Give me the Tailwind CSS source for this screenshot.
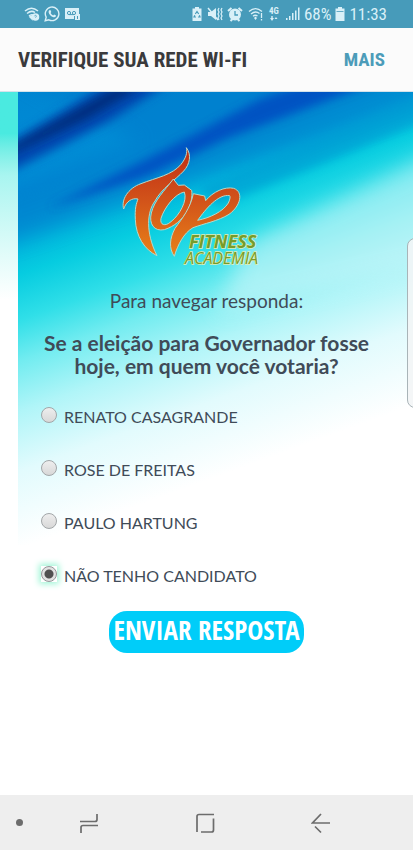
<!DOCTYPE html>
<html lang="pt-BR">
<head>
<meta charset="utf-8">
<meta name="viewport" content="width=device-width, initial-scale=1">
<title>Verifique sua rede Wi-Fi</title>
<script src="https://cdn.jsdelivr.net/npm/@tailwindcss/browser@4"></script>
</head>
<body class="min-h-screen flex flex-col bg-white font-['Lato',sans-serif] text-[#404b58]">

<div class="h-7 shrink-0 bg-[#479bba] text-[#d9f0f8] flex items-center justify-between pl-6 pr-[26px] font-['Roboto_Condensed','Roboto',sans-serif]">
  <div class="flex items-center gap-1">
    <svg class="w-4 h-4" viewBox="0 0 16 16" fill="none" stroke="currentColor" stroke-width="1.5"><path d="M1 5C5 1.500 10 1.500 14 5M3 7.500C6 5 9 5 11 6.500M5 10C6.500 8.500 8 8.500 9 9"/><path d="M6 11l2-1v3z" fill="currentColor"/><circle cx="11.500" cy="11" r="3" fill="currentColor"/><path d="M10.500 10.200c.2-1.200 2-1 1.900 0 0 .7-.9.800-.9 1.500" stroke="#479bba" stroke-width=".8"/></svg>
    <svg class="w-4 h-4" viewBox="0 0 16 16" fill="none" stroke="currentColor" stroke-width="1.400"><path d="M1.200 14.800l1-3.600a6.800 6.800 0 1 1 2.700 2.600z"/><path d="M5.300 4.300l1.100-.2.900 2-.7.900c.6 1.100 1.400 1.900 2.600 2.400l.9-.9 1.900 1-.2 1.100c-.8.900-1.900.8-3 .4C6.600 10.100 5 8.300 4.600 6.200c-.1-.8.200-1.400.7-1.900z" fill="currentColor" stroke="none"/></svg>
    <svg class="w-[17px] h-4" viewBox="0 0 17 16"><path d="M1 2h14v6h1v6h-5v-1H1z" fill="currentColor"/><g fill="none" stroke="#479bba"><circle cx="5" cy="7" r="1.600"/><circle cx="10" cy="7" r="1.600"/><path d="M5 8.600h5M13.500 10v3M10.500 10v3"/></g></svg>
  </div>
  <div class="flex items-center gap-1">
    <svg class="w-3 h-4" viewBox="0 0 12 16"><path d="M4 1h4v1.500h2.500V15h-9V2.500H4z" fill="currentColor"/><path d="M4.300 8L6 5.500 7.700 8M8.400 9.300L9 11H7M5 11H3l.8-1.800" fill="none" stroke="#479bba" stroke-width="1.200"/></svg>
    <svg class="w-4 h-4" viewBox="0 0 16 16" fill="none" stroke="currentColor" stroke-width="1.400"><path d="M1 6h3l5-4v12l-5-4H1z" fill="currentColor" stroke="none"/><path d="M1 2l10 12" /><path d="M12 2l-1 2 1 2-1 2 1 2-1 2 1 2M15 2l-1 2 1 2-1 2 1 2-1 2 1 2" stroke-width="1.200"/></svg>
    <svg class="w-4 h-4" viewBox="0 0 16 16"><circle cx="8" cy="8.500" r="6" fill="currentColor"/><path d="M1 5l3.500-3M15 5l-3.500-3M3.500 15l2-2M12.500 15l-2-2" stroke="currentColor" stroke-width="2"/><path d="M8 5v4h3" fill="none" stroke="#479bba" stroke-width="1.300"/></svg>
    <svg class="w-[17px] h-4" viewBox="0 0 17 16" fill="none" stroke="currentColor" stroke-width="1.300"><path d="M2 5.500C6 2 11 2 15 5.500M4 8C7 5.500 10 5.500 12.500 7.500M6 10.300C7.500 9 9 9 10.500 10"/><path d="M7 12l1.500-1.500L10 12l-1.500 2z" fill="currentColor" stroke="none"/><path d="M14.500 7v5M14.500 13v1.500"/></svg>
    <span class="w-3 flex flex-col items-center text-[9px] leading-[9px] font-bold">4G<svg class="w-2 h-[5px]" viewBox="0 0 8 5" fill="currentColor"><path d="M2 5L0 2h1.300V0h1.400v2H4zM6 1l1.500 2h-3z"/></svg></span>
    <svg class="w-4 h-4" viewBox="0 0 16 16" fill="currentColor"><path d="M2 12h1.500v2H2zM5 10h1.500v4H5zM8 7h1.500v7H8zM11 4.500h1.500V14H11zM14 1.500h1.500V14H14z"/></svg>
    <span class="text-[17px] leading-7">68%</span>
    <svg class="w-[10px] h-4" viewBox="0 0 10 16"><path d="M3 1h4v1.500h2.500V15h-9V2.500H3z" fill="currentColor"/><path d="M1.500 5.500h7" stroke="#479bba" stroke-width=".8"/></svg>
    <span class="text-[17px] leading-7">11:33</span>
  </div>
</div>

<header class="h-16 shrink-0 bg-[#fbfbfb] border-b border-[#d5e2ea] flex items-center justify-between pl-[18px] pr-7 font-['Roboto_Condensed','Roboto',sans-serif] font-bold">
  <h1 class="text-[21px] leading-6 text-[#3a3a3c]">VERIFIQUE SUA REDE WI-FI</h1>
  <a href="#" class="text-[19px] leading-6 text-[#4c9cb9]">MAIS</a>
</header>

<main class="relative grow flex flex-col items-center overflow-hidden">
  <div class="absolute left-0 top-0 w-[18px] h-52 bg-linear-to-b from-[#4aeae0] from-20% via-[#a8f5f0] via-40% to-white"></div>
  <svg class="absolute top-0 left-[18px] w-[calc(100%-18px)] h-[453px]" viewBox="0 0 395 453" preserveAspectRatio="none" aria-hidden="true">
    <defs>
      <linearGradient id="sky" gradientUnits="userSpaceOnUse" x1="0" y1="0" x2="147" y2="404">
        <stop offset="0" stop-color="#0086d2"/><stop offset=".22" stop-color="#008ed6"/><stop offset=".32" stop-color="#00b0dc"/>
        <stop offset=".4" stop-color="#06cce0"/><stop offset=".5" stop-color="#30dfe8"/><stop offset=".59" stop-color="#72ecf0"/>
        <stop offset=".7" stop-color="#b0f5f8"/><stop offset=".83" stop-color="#e2fbfd"/><stop offset="1" stop-color="#fff"/>
      </linearGradient>
      <filter id="soft" x="-20%" y="-40%" width="140%" height="180%"><feGaussianBlur stdDeviation="5"/></filter>
      <filter id="softer" x="-20%" y="-40%" width="140%" height="180%"><feGaussianBlur stdDeviation="10"/></filter>
    </defs>
    <rect width="395" height="453" fill="url(#sky)"/>
    <path d="M-20 -30H430V4L300 50L150 96L-20 154V100L120 50Z" fill="#007ccc" opacity=".65" filter="url(#softer)"/>
    <path d="M30 116L130 66L180 40L240 8L300 -14H370L290 16L210 46L130 84Z" fill="#0046c0" opacity=".8" filter="url(#soft)"/>
    <path d="M-20 58L90 -8H150L90 30L-20 86Z" fill="#0048b0" filter="url(#soft)"/>
    <path d="M-20 62L100 -6H124L70 26L-20 68Z" fill="#002870" opacity=".8" filter="url(#soft)"/>
    <path d="M180 96L300 46L420 -4V24L300 74L200 114Z" fill="#0098d2" opacity=".6" filter="url(#soft)"/>
    <path d="M230 150L420 60V170L200 220Z" fill="#d0f6f9" opacity=".55" filter="url(#softer)"/>
  </svg>

  <form class="relative w-full flex flex-col items-center pt-[53px]" onsubmit="return false">
    <svg class="w-[140px] h-[122px] ml-[-32px] overflow-visible" viewBox="60 30 420 366" role="img" aria-label="Top Fitness Academia">
      <defs><linearGradient id="flame" gradientUnits="userSpaceOnUse" x1="0" y1="40" x2="0" y2="360"><stop offset="0" stop-color="#c02c14"/><stop offset=".5" stop-color="#d2541a"/><stop offset="1" stop-color="#e88018"/></linearGradient></defs>
      <g fill="url(#flame)" stroke="#b5d8c8" stroke-width="3" stroke-linejoin="round" fill-rule="evenodd">
        <path d="M256 38C272 58 267 88 248 108C224 134 180 162 162 198C138 230 133 292 168 362C130 344 105 304 103 254C101 220 106 206 111 192C94 188 76 198 68 222C60 195 80 160 120 146C166 128 214 120 240 88C254 70 260 54 256 38Z"/>
        <path d="M217 132L232 151L250 150L272 166C278 204 252 264 190 284C160 290 143 268 151 234C160 196 190 168 217 132ZM250 171C222 176 190 218 180 250C176 270 192 276 210 260C236 240 260 196 250 171Z"/>
        <path d="M277 176L311 183L314 197C336 170 372 154 398 160C428 170 420 212 384 238C352 258 308 266 276 278C248 294 230 330 220 364C203 340 206 310 222 280C244 250 268 220 277 176ZM386 182C352 176 314 222 290 256C328 248 366 230 382 204C388 192 388 184 386 182Z"/>
      </g>
      <g fill="#769c2a" stroke="#e4edb0" stroke-width="4" paint-order="stroke" font-style="italic">
        <text x="264" y="338" font-size="54" font-weight="700" font-family="'Open Sans', sans-serif">FITNESS</text>
        <text x="252" y="387" font-size="48" font-family="'Open Sans', sans-serif">ACADEMIA</text>
      </g>
    </svg>

    <p class="mt-[22px] text-[19px] leading-6">Para navegar responda:</p>
    <h2 class="mt-[18px] text-[21px] leading-[23px] font-bold text-center">Se a eleição para Governador fosse<br>hoje, em quem você votaria?</h2>

    <div role="radiogroup" aria-label="Candidatos" class="w-full mt-[13px] pl-[41px] flex flex-col text-[16px]">
      <label class="h-[53px] flex items-center gap-[7px]"><input type="radio" name="voto" class="appearance-none size-4 mb-1 rounded-full border border-[#a2a6a8] bg-linear-to-b from-[#eeeeee] to-[#d8d8d8]">RENATO CASAGRANDE</label>
      <label class="h-[53px] flex items-center gap-[7px]"><input type="radio" name="voto" class="appearance-none size-4 mb-1 rounded-full border border-[#a2a6a8] bg-linear-to-b from-[#eeeeee] to-[#d8d8d8]">ROSE DE FREITAS</label>
      <label class="h-[53px] flex items-center gap-[7px]"><input type="radio" name="voto" class="appearance-none size-4 mb-1 rounded-full border border-[#a2a6a8] bg-linear-to-b from-[#eeeeee] to-[#d8d8d8]">PAULO HARTUNG</label>
      <label class="h-[53px] flex items-center gap-[7px]"><span class="size-4 mb-1 flex bg-white shadow-[0_0_6px_2px_#9ff5d6]"><input type="radio" name="voto" checked class="appearance-none size-4 rounded-full border border-[#929698] bg-[radial-gradient(circle,#505050_4px,#e2e2e2_5px)]"></span>NÃO TENHO CANDIDATO</label>
    </div>

    <button type="submit" class="mt-[9px] h-[42px] w-[195px] pb-1 rounded-[18px] bg-[#00cdf9] text-white font-['Open_Sans_Condensed','Roboto_Condensed','Roboto',sans-serif] font-bold text-[27px] leading-8 whitespace-nowrap flex items-center justify-center">ENVIAR RESPOSTA</button>
  </form>
  <div class="absolute right-[-12px] top-[146px] w-[18px] h-[170px] rounded-lg border border-[#a9b4b8] bg-[#f3f5f6]/90"></div>
</main>

<nav class="h-[55px] shrink-0 bg-[#eeeeee] text-[#6c6c6c] flex items-center pl-4">
  <span class="size-[7px] rounded-full bg-current"></span>
  <div class="grow flex justify-between pl-14 pr-[82px]">
    <button type="button" aria-label="Recentes"><svg class="w-5 h-6" viewBox="0 0 20 24" fill="none" stroke="currentColor" stroke-width="1.700"><path d="M1 10.500h15q2 0 2-2V3M19 14.500H4q-2 0-2 2V22"/></svg></button>
    <button type="button" aria-label="Início"><svg class="w-5 h-6" viewBox="0 0 20 24" fill="none" stroke="currentColor" stroke-width="1.700"><path d="M2 21V5.500q0-2 2-2H19M18.500 7.500V19q0 2-2 2H6"/></svg></button>
    <button type="button" aria-label="Voltar"><svg class="w-5 h-6" viewBox="0 0 20 24" fill="none" stroke="currentColor" stroke-width="1.700"><path d="M10 3L1.500 12H19M4 15.500L10 21.500"/></svg></button>
  </div>
</nav>
</body>
</html>
